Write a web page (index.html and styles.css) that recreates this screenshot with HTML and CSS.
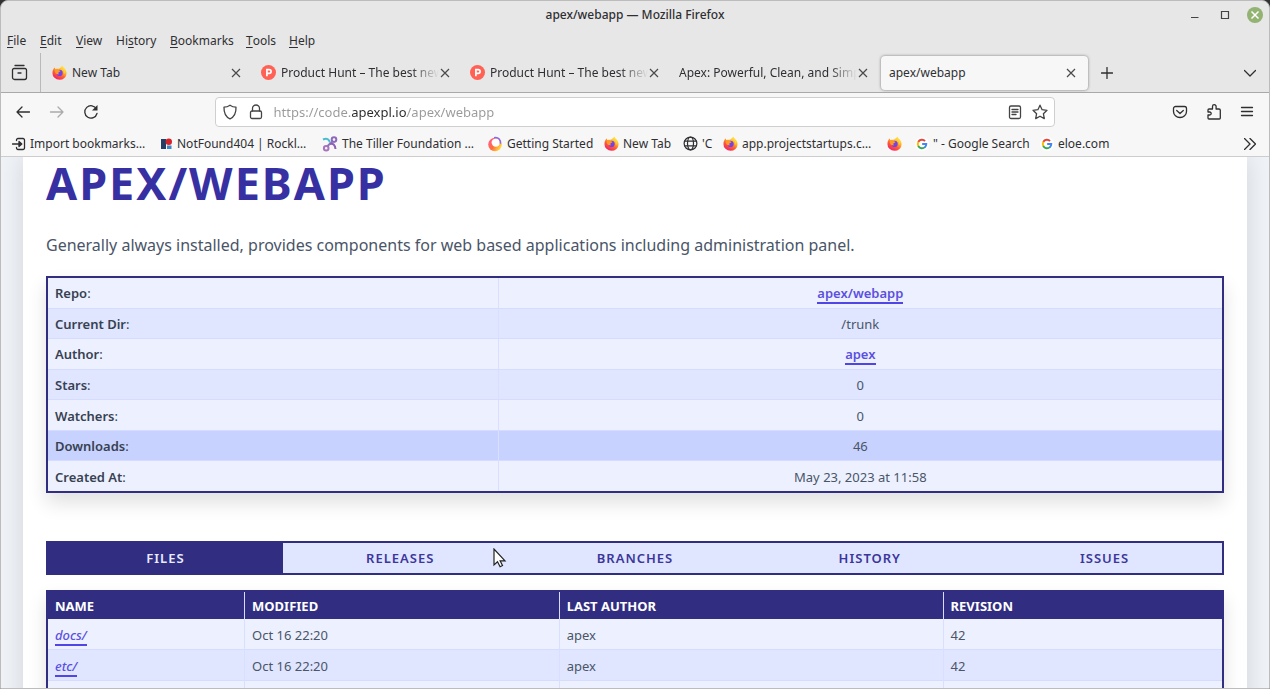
FILE: index.html
```html
<!DOCTYPE html>
<html lang="en">
<head>
<meta charset="utf-8">
<title>apex/webapp — Mozilla Firefox</title>
<link rel="stylesheet" href="styles.css">
</head>
<body>
<svg class="sprite" aria-hidden="true">
  <defs>
    <linearGradient id="flame" x1="0.8" y1="0.05" x2="0.25" y2="0.95">
      <stop offset="0" stop-color="#fff14a"/><stop offset="0.35" stop-color="#ffb52b"/><stop offset="0.65" stop-color="#ff5a36"/><stop offset="1" stop-color="#f02468"/>
    </linearGradient>
    <linearGradient id="ring" x1="0.1" y1="0.2" x2="0.9" y2="0.7">
      <stop offset="0" stop-color="#ff5f86"/><stop offset="0.5" stop-color="#ff7139"/><stop offset="1" stop-color="#ffd43a"/>
    </linearGradient>
    <symbol id="firefox" viewBox="0 0 16 16">
      <path fill="url(#flame)" d="M11 .5c.3 1.3 1.200 2 2.100 3 1.500 1.500 2.500 3.300 2.500 5.400A7.500 6.900 0 0 1 .5 8.700C.4 6.500 1.200 4.200 3 2.500c0 .8.200 1.400.6 1.900.9-.5 2-.6 3-.4C8 3.800 9.500 2.500 11 .5z"/>
      <circle cx="8.100" cy="8.400" r="3.300" fill="#7542e5"/>
      <path fill="#ff9a26" d="M3.400 4.300c1.500-.4 3 .1 4 1.400.9.100 1.500.3 1.600.7-.2.700-1.200 1-2 1.200-.3 1-.2 1.700.8 2.200-2 .7-4.500-.6-4.900-3z"/>
      <path fill="#ffd83b" d="M11 .7c-.7 2.500.5 3.300 1.500 4.800.8 1.200 1 2.700.4 4.200 1.600-1.600 1.600-4.200 0-6.300C12.100 2.500 11.300 2 11 .7z"/>
    </symbol>
    <symbol id="producthunt" viewBox="0 0 16 16">
      <circle cx="8" cy="8" r="8" fill="#ff6154"/>
      <path fill="none" stroke="#fff" stroke-width="1.800" d="M6.300 12V5h2.500a1.900 1.900 0 0 1 0 3.900H6.300"/>
    </symbol>
    <symbol id="google" viewBox="0 0 16 16">
      <circle cx="8" cy="8" r="8" fill="#fff"/>
      <g fill="none" stroke-width="2.200">
        <path stroke="#ea4335" d="M3.700 5.700A4.900 4.900 0 0 1 11.500 4.600"/>
        <path stroke="#fbbc05" d="M3.900 5.400a5 5 0 0 0 0 5.200"/>
        <path stroke="#34a853" d="M3.700 10.300a4.900 4.900 0 0 0 7.600 1.300"/>
        <path stroke="#4285f4" d="M8.200 8h4.700a4.800 4.800 0 0 1-1.900 3.900"/>
      </g>
    </symbol>
    <symbol id="close" viewBox="0 0 10 10"><path fill="none" stroke="currentColor" stroke-width="1.200" d="M1 1l8 8M9 1L1 9"/></symbol>
  </defs>
</svg>
<div class="window">
  <header class="titlebar">
    <span class="window-title">apex/webapp — Mozilla Firefox</span>
    <div class="window-controls">
      <button aria-label="Minimize"><svg width="16" height="16" viewBox="0 0 16 16"><path d="M4 10.500h7.500"/></svg></button>
      <button aria-label="Maximize"><svg width="16" height="16" viewBox="0 0 16 16"><path d="M4.500 4.500h7v7h-7z"/></svg></button>
      <button class="window-close" aria-label="Close"><svg width="16" height="16" viewBox="0 0 16 16"><path d="M4.500 4.500l7 7M11.500 4.500l-7 7"/></svg></button>
    </div>
  </header>
  <nav class="menubar" aria-label="Application menu">
    <button><u>F</u>ile</button><button><u>E</u>dit</button><button><u>V</u>iew</button><button>Hi<u>s</u>tory</button><button><u>B</u>ookmarks</button><button><u>T</u>ools</button><button><u>H</u>elp</button>
  </nav>
  <div class="tabstrip">
    <button class="recent" aria-label="Recent browsing"><svg class="line" width="17" height="17" viewBox="0 0 17 17"><path d="M4 1.500h9M3 4.500h11a1.500 1.500 0 0 1 1.500 1.500v7.500a2 2 0 0 1-2 2h-10a2 2 0 0 1-2-2V6A1.500 1.500 0 0 1 3 4.500zM7 9h3"/></svg></button>
    <div class="tab"><svg width="15" height="15"><use href="#firefox"/></svg><span class="tab-label">New Tab</span><button class="tab-close" aria-label="Close tab"><svg width="10" height="10"><use href="#close"/></svg></button></div>
    <div class="tab"><svg width="15" height="15"><use href="#producthunt"/></svg><span class="tab-label faded">Product Hunt – The best new</span><button class="tab-close" aria-label="Close tab"><svg width="10" height="10"><use href="#close"/></svg></button></div>
    <div class="tab"><svg width="15" height="15"><use href="#producthunt"/></svg><span class="tab-label faded">Product Hunt – The best new</span><button class="tab-close" aria-label="Close tab"><svg width="10" height="10"><use href="#close"/></svg></button></div>
    <div class="tab"><span class="tab-label faded">Apex: Powerful, Clean, and Simp</span><button class="tab-close" aria-label="Close tab"><svg width="10" height="10"><use href="#close"/></svg></button></div>
    <div class="tab active"><span class="tab-label">apex/webapp</span><button class="tab-close" aria-label="Close tab"><svg width="10" height="10"><use href="#close"/></svg></button></div>
    <button class="new-tab" aria-label="New tab"><svg class="line" width="12" height="12" viewBox="0 0 12 12"><path d="M6 .5v11M.5 6h11"/></svg></button>
    <button class="all-tabs" aria-label="List all tabs"><svg class="line" width="12" height="12" viewBox="0 0 12 12"><path d="M.5 3.500L6 9l5.500-5.500"/></svg></button>
  </div>
  <div class="navbar">
    <div class="history">
      <button aria-label="Back"><svg class="line" width="16" height="16" viewBox="0 0 16 16"><path d="M14.500 8H2M7 3L2 8l5 5"/></svg></button>
      <button aria-label="Forward" disabled><svg class="line" width="16" height="16" viewBox="0 0 16 16"><path d="M1.500 8H14M9 3l5 5-5 5"/></svg></button>
      <button aria-label="Reload"><svg class="line" width="16" height="16" viewBox="0 0 16 16"><path d="M13.500 5A6.200 6.200 0 1 0 14 9.500"/><path fill="currentColor" stroke="none" d="M14.500 1v5.500H9z"/></svg></button>
    </div>
    <label class="urlbar">
      <svg class="line" width="16" height="16" viewBox="0 0 16 16"><path d="M8 1.200c2 1.500 4 2 6 2C14.200 9 12 13 8 14.800 4 13 1.800 9 2 3.200c2 0 4-.5 6-2z"/></svg>
      <svg class="line" width="16" height="16" viewBox="0 0 16 16"><rect x="2.500" y="7" width="11" height="7.500" rx="1.500"/><path d="M4.500 7V4.500a3.500 3.500 0 0 1 7 0V7"/></svg>
      <input type="text" aria-label="Address" value="https://code.apexpl.io/apex/webapp">
      <svg class="line" width="14" height="16" viewBox="0 0 14 16"><rect x="1.500" y="2" width="11" height="12.500" rx="1.500"/><path d="M4 5.500h6M4 8h6M4 10.500h4"/></svg>
      <svg class="line" width="16" height="16" viewBox="0 0 16 16"><path d="M8 1.200l2.100 4.500 4.900.6-3.600 3.400.9 4.900L8 12.200l-4.300 2.400.9-4.900L1 6.300l4.900-.6z"/></svg>
    </label>
    <div class="tools">
      <button aria-label="Save to Pocket"><svg class="line" width="16" height="16" viewBox="0 0 16 16"><path d="M3.500 2.500h9a2 2 0 0 1 2 2V7.500a6.500 6 0 0 1-13 0v-3a2 2 0 0 1 2-2zM4.700 6.500L8 9.500l3.300-3"/></svg></button>
      <button aria-label="Extensions"><svg class="line" width="16" height="16" viewBox="0 0 16 16"><path d="M6.500 5V2.500a1.800 1.800 0 0 1 3.600 0V5H13a1.300 1.300 0 0 1 1.300 1.300V14a1 1 0 0 1-1 1H3a1 1 0 0 1-1-1v-3h1.700a1.500 1.500 0 0 0 0-3H2V6a1 1 0 0 1 1-1z"/></svg></button>
      <button aria-label="Open application menu"><svg class="line" width="14" height="14" viewBox="0 0 14 14"><path d="M1.500 2.500h11M1.500 6.500h11M1.500 10.500h11"/></svg></button>
    </div>
  </div>
  <nav class="bookmarks" aria-label="Bookmarks">
    <a href="#"><svg class="line" width="14" height="14" viewBox="0 0 14 14"><path d="M4.500 3.500V3A1.500 1.500 0 0 1 6 1.500h5A1.500 1.500 0 0 1 12.500 3v8a1.500 1.500 0 0 1-1.500 1.500H6A1.500 1.500 0 0 1 4.500 11v-.5M.5 7h7"/><path fill="currentColor" d="M7 4.500L9.800 7 7 9.500z"/></svg>Import bookmarks…</a>
    <a href="#"><svg width="14" height="14" viewBox="0 0 14 14"><path fill="#263c64" d="M2 2h5v10H2z"/><circle cx="9.800" cy="4.700" r="3.200" fill="#d3222a"/><path fill="#3c87c7" d="M8 8.500h4.500V12H8z"/></svg>NotFound404 | Rockl…</a>
    <a href="#"><svg width="16" height="16" viewBox="0 0 16 16" fill="none" stroke-width="2"><circle cx="12" cy="3.600" r="2.300" stroke="#8e68bb"/><circle cx="4.200" cy="12.200" r="2.300" stroke="#a773bf"/><path stroke="#9270bd" d="M5.500 10l5-4.500"/><path stroke="#49bcd0" d="M1 3.500c4-2 6 0 7 3"/><path stroke="#8c60b4" d="M8 8c3-1.200 5 1 5.500 5"/></svg>The Tiller Foundation …</a>
    <a href="#"><svg width="16" height="16" viewBox="0 0 16 16"><circle cx="8" cy="8.500" r="6.800" fill="url(#ring)"/><circle cx="8.800" cy="6.600" r="4.200" fill="#fff"/><path fill="none" stroke="#8b65ee" stroke-width="1.500" d="M7 1.700c4.500-1 6.800 2 6.400 6"/></svg>Getting Started</a>
    <a href="#"><svg width="15" height="15"><use href="#firefox"/></svg>New Tab</a>
    <a href="#"><svg class="line" width="15" height="15" viewBox="0 0 16 16"><circle cx="8" cy="8" r="6.800"/><ellipse cx="8" cy="8" rx="3.200" ry="6.800"/><path d="M1.800 5.500h12.400M1.800 10.500h12.400"/></svg>'C</a>
    <a href="#"><svg width="15" height="15"><use href="#firefox"/></svg>app.projectstartups.c…</a>
    <a href="#" aria-label="Firefox"><svg width="15" height="15"><use href="#firefox"/></svg></a>
    <a href="#"><svg width="14" height="14"><use href="#google"/></svg>" - Google Search</a>
    <a href="#"><svg width="14" height="14"><use href="#google"/></svg>eloe.com</a>
    <button aria-label="Show more bookmarks"><svg class="line" width="12" height="12" viewBox="0 0 12 12"><path d="M.5.5L6 6 .5 11.500M6 .5L11.500 6 6 11.500"/></svg></button>
  </nav>
  <main class="viewport">
    <article class="card">
      <h1>APEX/WEBAPP</h1>
      <p class="lead">Generally always installed, provides components for web based applications including administration panel.</p>
      <table class="grid info">
        <tr><th scope="row">Repo<span>:</span></th><td><a href="#">apex/webapp</a></td></tr>
        <tr><th scope="row">Current Dir<span>:</span></th><td>/trunk</td></tr>
        <tr><th scope="row">Author<span>:</span></th><td><a href="#">apex</a></td></tr>
        <tr><th scope="row">Stars<span>:</span></th><td>0</td></tr>
        <tr><th scope="row">Watchers<span>:</span></th><td>0</td></tr>
        <tr class="hovered"><th scope="row">Downloads<span>:</span></th><td>46</td></tr>
        <tr><th scope="row">Created At<span>:</span></th><td>May 23, 2023 at 11:58</td></tr>
      </table>
      <nav class="sections" aria-label="Repository">
        <a class="current" href="#">FILES</a><a href="#">RELEASES</a><a href="#">BRANCHES</a><a href="#">HISTORY</a><a href="#">ISSUES</a>
      </nav>
      <table class="grid files">
        <thead><tr><th scope="col">NAME</th><th scope="col">MODIFIED</th><th scope="col">LAST AUTHOR</th><th scope="col">REVISION</th></tr></thead>
        <tbody>
          <tr><td><a href="#">docs/</a></td><td>Oct 16 22:20</td><td>apex</td><td>42</td></tr>
          <tr><td><a href="#">etc/</a></td><td>Oct 16 22:20</td><td>apex</td><td>42</td></tr>
          <tr><td></td><td></td><td></td><td></td></tr>
        </tbody>
      </table>
    </article>
  </main>
  <svg class="pointer" width="14" height="20" viewBox="0 0 14 20" aria-hidden="true"><path fill="#fff" stroke="#222" stroke-width="1.200" d="M1 1v16l3.500-3.200 2.600 5 2.400-1.200-2.400-4.800H12z"/></svg>
</div>
</body>
</html>
```
FILE: styles.css
```css
* { box-sizing: border-box; }
body {
  margin: 0;
  background: #333;
  color: #2f2f33;
  font: 13px/20px "Noto Sans", "Open Sans", sans-serif;
}
button {
  display: flex;
  align-items: center;
  justify-content: center;
  padding: 0;
  border: 0;
  background: none;
  color: inherit;
  font: inherit;
}
svg { flex: none; display: block; }
a { color: inherit; text-decoration: none; }
.sprite { position: absolute; width: 0; height: 0; }
.line {
  fill: none;
  stroke: currentColor;
  stroke-width: 1.3;
  stroke-linecap: round;
  stroke-linejoin: round;
}
.window {
  position: relative;
  display: flex;
  flex-direction: column;
  height: 100vh;
  overflow: hidden;
  border: 1px solid #bcbcbc;
  border-radius: 8px 8px 0 0;
  background: #e7e7e7;
}

/* Title bar and menus */
.titlebar {
  display: grid;
  grid-template-columns: 1fr auto 1fr;
  align-items: center;
  height: 27px;
  padding: 0 6px;
}
.window-title { grid-column: 2; font-size: 12px; font-weight: 500; }
.window-controls { display: flex; justify-content: flex-end; gap: 14px; }
.window-controls svg { fill: none; stroke: #444; stroke-width: 1.2; }
.window-controls .window-close { border-radius: 50%; background: #92b372; }
.window-controls .window-close svg { stroke: #fff; stroke-width: 1.5; }
.menubar {
  display: grid;
  grid-template-columns: 33px 36px 40px 54px 76px 43px auto;
  justify-content: start;
  height: 25px;
  padding-left: 6px;
  font-size: 12px;
}
.menubar button { justify-content: start; white-space: pre; }
.menubar u { text-underline-offset: 2px; }

/* Tabs */
.tabstrip {
  display: flex;
  align-items: center;
  height: 40px;
  padding-right: 13px;
  border-bottom: 1px solid #a9a9a9;
}
.recent { align-self: stretch; width: 40px; padding-right: 2px; border-right: 1px solid #b9b9b9; }
.tab {
  display: flex;
  align-items: center;
  flex: 0 1 209px;
  gap: 5px;
  min-width: 0;
  height: 34px;
  padding: 0 12px 0 8px;
  font-size: 12px;
}
.recent + .tab { margin-left: 3px; }
.tab-label { flex: 1; min-width: 0; overflow: hidden; white-space: nowrap; }
.tab .faded {
  margin-right: -4px;
  -webkit-mask-image: linear-gradient(to left, transparent, #000 28px);
  mask-image: linear-gradient(to left, transparent, #000 28px);
}
.tab.active {
  flex-basis: 207px;
  margin-left: 1px;
  border-radius: 4px;
  background: #f7f7f7;
  box-shadow: 0 0 3px #777;
}
.tab-close { color: #4a4a4d; }
.new-tab { width: 38px; height: 32px; }
.all-tabs { width: 12px; height: 32px; margin-left: auto; }

/* Address row */
.navbar {
  display: grid;
  grid-template-columns: 1fr 840px 1fr;
  align-items: center;
  height: 38px;
  padding: 0 15px 0 14px;
  background: #f7f7f7;
}
.history { display: flex; gap: 18px; }
.history button:disabled { color: #aaa; }
.urlbar {
  display: flex;
  align-items: center;
  gap: 10px;
  height: 30px;
  padding: 0 6px;
  border: 1px solid #cfcfcf;
  border-radius: 4px;
  background: #fff;
}
.urlbar svg { color: #444; }
.urlbar input {
  flex: 1;
  min-width: 0;
  padding: 0;
  border: 0;
  outline: 0;
  background: linear-gradient(to right, #999 78px, #2a2a2a 78px, #2a2a2a 133px, #999 133px);
  -webkit-background-clip: text;
  background-clip: text;
  color: transparent;
  font: inherit;
}
.tools { display: flex; justify-content: flex-end; align-items: center; gap: 18px; }

/* Bookmarks */
.bookmarks {
  display: grid;
  grid-template-columns: 147px 163px 165px 117px 79px 40px 164px 28px 125px 70px 1fr;
  align-items: center;
  height: 26px;
  padding: 0 13px 0 11px;
  border-bottom: 1px solid #cdcdcd;
  background: #f7f7f7;
  font-size: 12px;
}
.bookmarks a { display: flex; align-items: center; gap: 4px; white-space: nowrap; }
.bookmarks button { justify-content: end; }

/* Page */
.viewport {
  flex: 1;
  min-height: 0;
  overflow: hidden;
  padding: 0 22px;
  background: #eff3f8;
}
.card {
  min-height: 100%;
  padding: 0 23px;
  background: #fff;
  box-shadow: 0 0 24px rgba(0, 0, 0, 0.12);
  color: #4a5568;
}
h1 {
  margin: 0;
  color: #3730a3;
  font-size: 45px;
  font-weight: 700;
  line-height: 52px;
  letter-spacing: 2px;
}
.lead { margin: 23px 0 18px; font-size: 16px; line-height: 26px; }
.grid {
  width: 100%;
  border: 2px solid #312e81;
  border-collapse: separate;
  border-spacing: 0;
  table-layout: fixed;
  background: #edf1ff;
  box-shadow: 0 10px 18px rgba(0, 0, 0, 0.12);
  font-size: 13px;
  line-height: 19px;
}
.grid th, .grid td { padding: 6px 7px 4px; border-bottom: 1px solid #d5dcff; text-align: left; }
.grid th + td, .grid td + td { border-left: 1px solid #d8dfff; }
.grid tr:last-child > * { border-bottom: 0; }
.grid tr:nth-child(even) { background: #e0e6ff; }
.grid .hovered:nth-child(even) { background: #c7d2fe; }
.grid a { border-bottom: 2px solid #4f46e5; color: #5b50e0; font-weight: 500; }
.info { height: 217px; }
.info th { width: 38.3%; color: #374151; font-weight: 600; }
.info th span { font-weight: 400; }
.grid.info td { text-align: center; }
.info a { font-weight: 600; }
.sections {
  display: grid;
  grid-template-columns: repeat(5, 1fr);
  margin: 48px 0 15px;
  border: 2px solid #312e81;
  background: #e0e6ff;
  color: #3c369b;
  font-size: 13px;
  font-weight: 600;
  letter-spacing: 1px;
  line-height: 30px;
  text-align: center;
}
.sections .current { background: #312e81; color: #e8ecff; }
.grid.files th {
  padding: 5px 7px 4px;
  border: 0;
  background: #312e81;
  color: #fff;
  line-height: 18px;
}
.grid.files th + th { border-left: 1px solid #d5dcff; }
.files th:nth-child(1) { width: 16.7%; }
.files th:nth-child(2) { width: 26.8%; }
.files th:nth-child(3) { width: 32.7%; }
.files tbody tr { height: 31px; }
.files a { font-style: italic; }

.pointer { position: absolute; left: 492px; top: 547px; }
```
